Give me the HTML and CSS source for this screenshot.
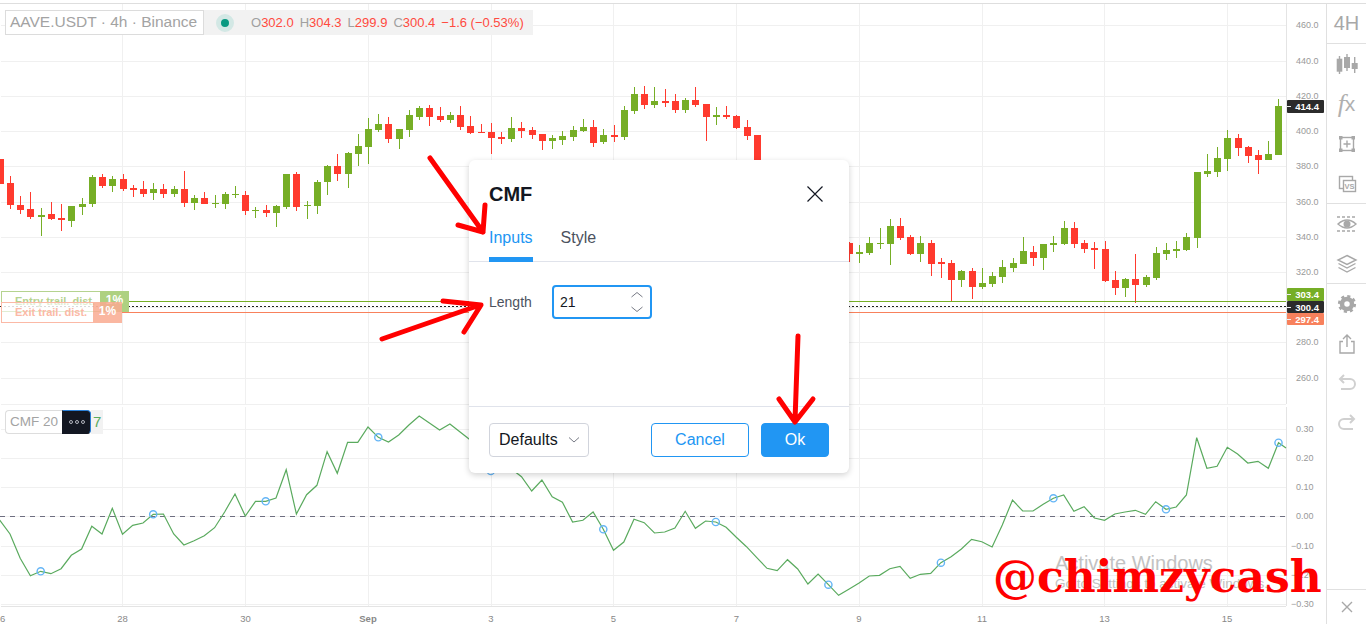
FILE: index.html
```html
<!DOCTYPE html>
<html lang="en">
<head>
  <meta charset="UTF-8">
  <meta name="viewport" content="width=device-width, initial-scale=1.0">
  <title>AAVE.USDT CMF settings</title>
  <link rel="stylesheet" href="styles.css">
</head>
<body>
  <div class="workspace">
    <main class="chart">
      <svg class="plot" id="plot" viewBox="0 4 1326 620" width="1326" height="620"></svg>

      <!-- Symbol legend -->
      <div class="legend">
        <div class="legend-title">AAVE.USDT · 4h · Binance</div>
        <div class="legend-values">
          <span class="status-dot"></span>
          <span class="ohlc">
            <span>O<b>302.0</b></span>
            <span>H<b>304.3</b></span>
            <span>L<b>299.9</b></span>
            <span>C<b>300.4</b></span>
            <span><b>−1.6 (−0.53%)</b></span>
          </span>
        </div>
      </div>

      <!-- Trailing stop labels -->
      <div class="trail trail-entry">
        <span class="trail-name">Entry trail. dist.</span>
        <span class="trail-pct">1%</span>
      </div>
      <div class="trail trail-exit">
        <span class="trail-name">Exit trail. dist.</span>
        <span class="trail-pct">1%</span>
      </div>

      <!-- Indicator legend -->
      <div class="study">
        <span class="study-name">CMF 20</span>
        <span class="study-more"><i></i><i></i><i></i></span>
        <span class="study-value">7</span>
      </div>

      <!-- Settings dialog -->
      <section class="dialog">
        <header class="dialog-head">
          <h2 class="dialog-title">CMF</h2>
          <svg class="dialog-close" viewBox="0 0 18 18" width="18" height="18">
            <path d="M1.5 1.5 L16.5 16.5 M16.5 1.5 L1.5 16.5"/>
          </svg>
        </header>
        <nav class="tabs">
          <span class="tab tab-active">Inputs</span>
          <span class="tab">Style</span>
        </nav>
        <div class="dialog-body">
          <span class="field-label">Length</span>
          <div class="number-input">
            <span>21</span>
            <svg class="stepper" viewBox="0 0 14 22" width="14" height="22">
              <path d="M1.5 6 L7 1.5 L12.5 6 M1.5 16 L7 20.5 L12.5 16"/>
            </svg>
          </div>
        </div>
        <footer class="dialog-foot">
          <div class="defaults">
            <span>Defaults</span>
            <svg class="stepper" viewBox="0 0 12 8" width="12" height="8">
              <path d="M1 1.5 L6 6 L11 1.5"/>
            </svg>
          </div>
          <div class="actions">
            <span class="btn btn-cancel">Cancel</span>
            <span class="btn btn-ok">Ok</span>
          </div>
        </footer>
      </section>

      <div class="activate">
        <div class="activate-title">Activate Windows</div>
        <div class="activate-sub">Go to Settings to activate Windows.</div>
      </div>
      <div class="handle">@chimzycash</div>

      <!-- Red annotation arrows -->
      <svg class="arrows" viewBox="0 4 1326 620" width="1326" height="620">
        <path d="M430 158 L483 232 M485 205 L483 232 L458 225"/>
        <path d="M382 339 L480 305 M443 301 L481 305 L464 332"/>
        <path d="M798 336 L795 421 M779 399 L795 422 L813 399"/>
      </svg>
    </main>

    <aside class="toolbar">
      <div class="tool-group">
        <div class="tool tool-interval">4H</div>
      </div>
      <div class="tool-group">
        <div class="tool">
          <svg viewBox="0 0 24 24" width="24" height="24">
            <path class="ico-line" d="M4.5 4 V22 M12 2 V19 M19.7 5 V21"/>
            <rect class="ico-fill" x="1.7" y="6.7" width="5.6" height="13"/>
            <rect class="ico-fill" x="9" y="5" width="6" height="11"/>
            <rect class="ico-fill" x="16.7" y="11" width="6" height="6"/>
          </svg>
        </div>
        <div class="tool tool-fx"><i>f</i>x</div>
        <div class="tool">
          <svg viewBox="0 0 24 24" width="24" height="24">
            <rect class="ico-line" x="5.5" y="5.5" width="13" height="13"/>
            <path class="ico-line" d="M12 8.5 V15.5 M8.5 12 H15.5"/>
            <rect class="ico-fill" x="4" y="4" width="3.5" height="3.5"/>
            <rect class="ico-fill" x="16.5" y="4" width="3.5" height="3.5"/>
            <rect class="ico-fill" x="4" y="16.5" width="3.5" height="3.5"/>
            <rect class="ico-fill" x="16.5" y="16.5" width="3.5" height="3.5"/>
          </svg>
        </div>
        <div class="tool">
          <svg viewBox="0 0 24 24" width="24" height="24">
            <rect class="ico-line" x="4.5" y="4.5" width="13" height="12"/>
            <rect class="ico-line ico-paper" x="8.5" y="8.5" width="12" height="11"/>
            <text class="ico-vs" x="14.5" y="17">VS</text>
          </svg>
        </div>
      </div>
      <div class="tool-group">
        <div class="tool">
          <svg viewBox="0 0 24 24" width="24" height="24">
            <path class="ico-line ico-dash" d="M2 5 H22 M2 19 H22"/>
            <path class="ico-line" d="M3 12 Q12 4 21 12 Q12 20 3 12 Z"/>
            <circle class="ico-fill" cx="12" cy="12" r="3.5"/>
          </svg>
        </div>
        <div class="tool">
          <svg viewBox="0 0 24 24" width="24" height="24">
            <path class="ico-line" d="M12 3.5 L21 8 L12 12.5 L3 8 Z M3.5 11.5 L12 16 L20.5 11.5 M3.5 15.5 L12 20 L20.5 15.5"/>
          </svg>
        </div>
      </div>
      <div class="tool-group tool-group-last">
        <div class="tool">
          <svg viewBox="0 0 24 24" width="24" height="24">
            <circle class="ico-gear" cx="12" cy="12" r="5"/>
            <circle class="ico-teeth" cx="12" cy="12" r="7.6"/>
          </svg>
        </div>
        <div class="tool">
          <svg viewBox="0 0 24 24" width="24" height="24">
            <path class="ico-line" d="M8 9.5 H5 V21 H19 V9.5 H16 M12 15 V3 M8 7 L12 3 L16 7"/>
          </svg>
        </div>
        <div class="tool">
          <svg class="ico-faint" viewBox="0 0 24 24" width="24" height="24">
            <path d="M5 7 H15 a5 5 0 0 1 0 10 H6 M9 3 L5 7 L9 11"/>
          </svg>
        </div>
        <div class="tool">
          <svg class="ico-faint" viewBox="0 0 24 24" width="24" height="24">
            <path d="M19 7 H9 a5 5 0 0 0 0 10 H18 M15 3 L19 7 L15 11"/>
          </svg>
        </div>
      </div>
      <div class="tool-close">
        <svg viewBox="0 0 24 24" width="24" height="24">
          <path class="ico-line" d="M7 7 L17 17 M17 7 L7 17"/>
        </svg>
      </div>
    </aside>
  </div>

  <script src="chart.js"></script>
</body>
</html>
```

FILE: styles.css
```css
* {
  box-sizing: border-box;
}

html, body {
  margin: 0;
  height: 624px;
  overflow: hidden;
  background: #fff;
  font-family: "Liberation Sans", Arial, sans-serif;
}

/* Page frame */
.workspace {
  display: flex;
  height: 624px;
  padding-top: 3px;
}

.workspace > * {
  border-top: 1px solid #dedede;
}

.chart {
  position: relative;
  flex: 1;
  height: 621px;
}

.plot, .arrows {
  display: block;
}

.arrows {
  position: absolute;
  left: 0;
  top: 0;
  pointer-events: none;
}

.arrows path {
  fill: none;
  stroke: #f00;
  stroke-width: 5;
  stroke-linecap: round;
  stroke-linejoin: round;
}

/* Plot contents */
.grid {
  stroke: #f0f0f0;
  stroke-width: 1;
  shape-rendering: crispEdges;
}

.axis-line {
  stroke: #e4e4e4;
  stroke-width: 1;
  shape-rendering: crispEdges;
}

.axis-text {
  fill: #999;
  font-size: 9px;
}

.time-text {
  fill: #888;
  font-size: 9.5px;
  text-anchor: middle;
}

.time-strong {
  font-weight: bold;
}

.up {
  fill: #76ae26;
}

.down {
  fill: #ff3a2e;
}

.cmf-line {
  fill: none;
  stroke: #5aaa5e;
  stroke-width: 1.2;
}

.cmf-dot {
  fill: none;
  stroke: #64b5f6;
  stroke-width: 1.4;
}

.zero-line {
  stroke: #6e6e80;
  stroke-width: 1;
  stroke-dasharray: 5 5;
  shape-rendering: crispEdges;
}

.level-up {
  stroke: #76ae26;
  shape-rendering: crispEdges;
}

.level-down {
  stroke: #f8815c;
  shape-rendering: crispEdges;
}

.level-last {
  stroke: #222;
  stroke-dasharray: 2 2;
  shape-rendering: crispEdges;
}

.tag-text {
  fill: #fff;
  font-size: 9.5px;
  font-weight: bold;
  text-anchor: end;
}

/* Symbol legend */
.legend {
  position: absolute;
  left: 5px;
  top: 6px;
  display: flex;
  height: 25px;
}

.legend-title {
  width: 199px;
  padding-left: 4px;
  border: 1px solid #dcdcdc;
  background: #fff;
  color: #a3a3a3;
  font-size: 15.5px;
  line-height: 22px;
  white-space: nowrap;
}

.legend-values {
  display: flex;
  align-items: center;
  width: 329px;
  padding-left: 12px;
  background: #f2f2f2;
}

.status-dot {
  width: 18px;
  height: 18px;
  border: 5px solid #d3e8e5;
  border-radius: 50%;
  background: #089981;
}

.ohlc {
  display: flex;
  gap: 6px;
  margin-left: 17px;
  color: #a0a0a0;
  font-size: 13px;
}

.ohlc b {
  color: #ff4a40;
  font-weight: normal;
}

/* Trailing stop labels */
.trail {
  position: absolute;
  left: 1px;
  display: flex;
  height: 21px;
  font-size: 11px;
  font-weight: bold;
  line-height: 19px;
}

.trail-entry {
  top: 287px;
  color: #b5d38f;
}

.trail-exit {
  top: 298px;
  color: #fbb9a6;
}

.trail-name {
  padding-left: 13px;
  border: 1px solid currentColor;
  border-right: 0;
  background: rgba(255, 255, 255, 0.6);
  white-space: nowrap;
}

.trail-entry .trail-name {
  width: 99px;
}

.trail-exit .trail-name {
  width: 92px;
}

.trail-pct {
  width: 29px;
  color: #fff;
  font-size: 12px;
  text-align: center;
}

.trail-entry .trail-pct {
  background: #aed181;
}

.trail-exit .trail-pct {
  background: rgba(249, 170, 145, 0.85);
}

/* Indicator legend */
.study {
  position: absolute;
  left: 5px;
  top: 406px;
  display: flex;
  height: 24px;
}

.study-name {
  width: 57px;
  padding-left: 4px;
  border: 1px solid #ddd;
  border-right: 0;
  border-radius: 4px 0 0 4px;
  background: #fff;
  color: #a3a3a3;
  font-size: 13.5px;
  line-height: 22px;
}

.study-more {
  display: flex;
  align-items: center;
  justify-content: center;
  gap: 2px;
  width: 29px;
  border: 1px solid #131722;
  border-right-color: #2a7fd6;
  border-top-color: #2a7fd6;
  border-radius: 0 4px 4px 0;
  background: #131722;
}

.study-more i {
  width: 4px;
  height: 4px;
  border: 1px solid #b2b5be;
  border-radius: 50%;
}

.study-value {
  width: 12px;
  padding-left: 2px;
  background: #f2f2f2;
  color: #5aaa5e;
  font-size: 15px;
  line-height: 24px;
}

/* Settings dialog */
.dialog {
  position: absolute;
  left: 469px;
  top: 156px;
  display: flex;
  flex-direction: column;
  width: 380px;
  height: 313px;
  border-radius: 6px;
  background: #fff;
  box-shadow: 0 2px 6px rgba(0, 0, 0, 0.18);
}

.dialog-head {
  display: flex;
  align-items: flex-start;
  justify-content: space-between;
  height: 60px;
  padding: 22px 25px 0 20px;
}

.dialog-title {
  margin: 0;
  color: #131722;
  font-size: 20px;
  line-height: 24px;
}

.dialog-close {
  margin-top: 3px;
  fill: none;
  stroke: #131722;
  stroke-width: 1.2;
}

.tabs {
  display: flex;
  gap: 28px;
  height: 42px;
  padding: 0 20px;
  border-bottom: 1px solid #e0e3eb;
}

.tab {
  height: 42px;
  padding-top: 9px;
  border-bottom: 5px solid transparent;
  color: #4c525e;
  font-size: 16px;
  line-height: 18px;
}

.tab-active {
  border-bottom-color: #2196f3;
  color: #2196f3;
}

.dialog-body {
  display: flex;
  flex: 1;
  align-items: flex-start;
  padding: 23px 20px 0;
}

.field-label {
  width: 63px;
  color: #4c525e;
  font-size: 14px;
  line-height: 34px;
}

.number-input {
  display: flex;
  align-items: center;
  justify-content: space-between;
  width: 100px;
  height: 34px;
  padding: 0 6px 0 6px;
  border: 2px solid #2196f3;
  border-radius: 4px;
  color: #131722;
  font-size: 14px;
}

.stepper {
  fill: none;
  stroke: #787b86;
  stroke-width: 1;
}

.dialog-foot {
  display: flex;
  justify-content: space-between;
  padding: 16px 20px;
  border-top: 1px solid #e0e3eb;
}

.defaults {
  display: flex;
  align-items: center;
  justify-content: space-between;
  width: 100px;
  height: 34px;
  padding: 0 8px 0 9px;
  border: 1px solid #d1d4dc;
  border-radius: 4px;
  color: #131722;
  font-size: 16px;
}

.actions {
  display: flex;
  gap: 12px;
}

.btn {
  height: 34px;
  border: 1px solid #2196f3;
  border-radius: 4px;
  font-size: 16px;
  line-height: 32px;
  text-align: center;
}

.btn-cancel {
  width: 98px;
  color: #2196f3;
}

.btn-ok {
  width: 68px;
  background: #2196f3;
  color: #fff;
}

/* Desktop overlays */
.activate {
  position: absolute;
  left: 1055px;
  top: 547px;
  color: #c2c2c2;
}

.activate-title {
  font-size: 20px;
  line-height: 24px;
}

.activate-sub {
  font-size: 13.5px;
  line-height: 18px;
}

.handle {
  position: absolute;
  left: 993px;
  top: 547px;
  color: #f00;
  font-family: "DejaVu Serif", serif;
  font-size: 44px;
  font-weight: bold;
  line-height: 52px;
  white-space: nowrap;
}

/* Right toolbar */
.toolbar {
  display: flex;
  flex-direction: column;
  flex: none;
  width: 40px;
  height: 621px;
  border-left: 1px solid #e0e0e0;
}

.tool-group {
  border-bottom: 1px solid #e0e0e0;
}

.tool-group:first-child .tool {
  height: 39px;
}

.tool-group-last {
  border-bottom: 0;
}

.tool {
  display: flex;
  align-items: center;
  justify-content: center;
  height: 40px;
}

.tool-group:nth-child(2) .tool:last-child,
.tool-group:nth-child(3) .tool:last-child {
  height: 39px;
}

.tool-interval {
  color: #a8a8a8;
  font-size: 20px;
}

.tool-fx {
  color: #b0b0b0;
  font-size: 21px;
}

.tool-fx i {
  font-family: "Liberation Serif", serif;
  font-size: 26px;
}

.tool-close {
  display: flex;
  align-items: center;
  justify-content: center;
  height: 35px;
  margin-top: auto;
  border-top: 1px solid #e0e0e0;
}

.ico-line {
  fill: none;
  stroke: #a8a8a8;
  stroke-width: 1.4;
}

.ico-fill {
  fill: #a8a8a8;
}

.ico-paper {
  fill: #fff;
}

.ico-dash {
  stroke-dasharray: 3 2;
}

.ico-vs {
  fill: #a8a8a8;
  font-size: 7.5px;
  font-weight: bold;
  text-anchor: middle;
}

.ico-gear {
  fill: none;
  stroke: #a8a8a8;
  stroke-width: 4.5;
}

.ico-teeth {
  fill: none;
  stroke: #a8a8a8;
  stroke-width: 3;
  stroke-dasharray: 3 2.97;
}

.ico-faint {
  fill: none;
  stroke: #d0d0d0;
  stroke-width: 2;
}
```

FILE: chart.js
```js
// Candles: top of wick, top of body, bottom of body, bottom of wick, direction
const candles = [
  [159,159,184,184,0],[176,183,205,209,0],[196,205,210,214,0],[192,209,217,219,0],[208,215,217,236,1],
  [202,214,219,220,0],[204,218,220,231,0],[206,206,221,227,1],[198,204,207,215,1],[175,177,204,207,1],
  [174,177,186,188,0],[176,179,186,192,1],[174,179,189,191,0],[185,188,190,197,0],[181,189,194,197,0],
  [183,189,193,200,1],[184,189,194,198,0],[186,189,194,197,1],[171,189,203,207,0],[195,198,203,210,1],
  [192,198,204,204,0],[195,203,204,208,1],[192,194,204,209,1],[186,194,195,198,1],[191,195,211,215,0],
  [207,210,211,218,1],[205,210,213,217,0],[205,206,213,227,1],[174,174,207,209,1],[172,174,207,211,0],
  [201,205,206,219,1],[180,182,206,214,1],[165,166,182,195,1],[154,166,174,181,0],[152,153,174,188,1],
  [134,146,154,166,1],[118,129,147,164,1],[114,124,130,132,1],[117,124,139,143,0],[129,129,139,149,1],
  [110,115,130,137,1],[106,108,117,120,1],[105,108,117,126,0],[107,116,120,122,0],[112,115,120,123,1],
  [106,115,127,130,0],[116,126,133,134,0],[124,132,133,133,0],[123,132,138,154,0],[132,137,139,144,0],
  [117,128,139,142,1],[122,128,131,138,0],[127,130,135,139,0],[134,134,141,150,0],[135,138,141,149,1],
  [131,136,140,145,1],[126,130,137,141,1],[119,127,131,132,1],[120,127,143,147,0],[129,135,142,144,1],
  [125,135,137,142,0],[106,110,137,140,1],[87,94,111,114,1],[86,94,105,109,0],[87,101,105,108,1],
  [89,101,103,107,0],[94,101,110,113,0],[98,100,110,113,1],[87,100,105,107,0],[104,104,117,141,0],
  [107,115,117,125,1],[106,115,117,119,0],[115,116,128,129,0],[120,127,136,140,0],[135,135,165,165,0],
  null,null,null,null,null,null,null,null,
  [242,243,254,262,0],[245,252,254,263,1],[237,243,253,255,1],[228,243,244,249,1],[219,226,244,265,1],
  [218,226,238,240,0],[235,237,254,255,0],[236,243,254,262,1],[240,243,264,276,0],[258,262,264,278,0],
  [260,263,280,301,0],[270,271,280,287,1],[268,271,287,299,0],[268,283,287,289,1],[272,276,284,287,1],
  [260,267,277,283,1],[258,263,268,272,1],[237,251,264,264,1],[246,252,258,266,0],[244,244,258,270,1],
  [236,243,245,252,1],[221,228,244,245,1],[222,228,244,248,0],[240,243,249,253,0],[242,248,250,269,0],
  [241,249,281,282,0],[271,280,288,295,0],[278,279,288,297,1],[254,279,285,303,0],[275,277,285,287,1],
  [247,253,278,280,1],[243,250,254,260,1],[241,249,251,258,1],[233,237,250,251,1],[172,172,238,248,1],
  [154,171,174,177,1],[147,158,172,177,1],[130,138,159,171,1],[134,138,148,156,0],[146,147,156,163,0],
  [150,155,160,174,0],[141,154,160,160,1],[99,106,155,155,1]
];

const cmf = [
  520,534,558.3,575.7,571.3,573.7,568.7,555.3,549,526.3,534,508.3,534.3,525.3,523,514.3,514,534,545,540.7,
  535.7,527.7,511.7,494,516,501.3,501.3,498,469.7,514,494.7,485.3,451.7,473.3,442.3,442.3,427,437.3,442,435,
  425,416,423,430,424,432,440,456,471,462,468.7,476.7,491,480,496.7,502.3,522,520.3,512,529.3,
  550.3,542,519.3,522.7,533,532,528,511.3,528.3,521,522,527.3,537.3,546.7,557.7,568.3,570.7,559.7,569,584,
  574,584.7,595.3,589.3,583,576,575.3,568.7,566.3,578.3,574.3,573.3,562.7,556.7,549,539.3,541.7,547,525,500,
  511,511,504.3,498.3,495,511.3,506.7,518,520.3,514,512,510.3,514.3,501.7,509.3,507,495,437.7,468.3,466.3,
  447.3,454,463,461.3,468.3,442.7,450
];

const barX = i => -0.26 + 10.23 * i;
const plotRight = 1286;
let svg = '';

function hLine(y, from, to, cls) {
  svg += `<line class="${cls}" x1="${from}" x2="${to}" y1="${y}" y2="${y}"/>`;
}

function vLine(x, from, to, cls) {
  svg += `<line class="${cls}" x1="${x}" x2="${x}" y1="${from}" y2="${to}"/>`;
}

function label(x, y, cls, text) {
  svg += `<text class="${cls}" x="${x}" y="${y}">${text}</text>`;
}

// Price pane grid and scale
const prices = [[25,'460.0'],[61,'440.0'],[96,'420.0'],[131,'400.0'],[166,'380.0'],[202,'360.0'],[237,'340.0'],[272,'320.0'],[307,'300.0'],[342,'280.0'],[378,'260.0']];
prices.forEach(([y, text]) => {
  hLine(y + 0.5, 1, plotRight, 'grid');
  label(1296, y + 3, 'axis-text', text);
});

// Indicator pane grid and scale
const levels = [[429,'0.30'],[458,'0.20'],[487,'0.10'],[516,'0.00'],[546,'−0.10'],[575,'−0.20'],[604,'−0.30']];
levels.forEach(([y, text]) => {
  hLine(y + 0.5, 1, plotRight, 'grid');
  label(text[0] === '−' ? 1291 : 1296, y + 3, 'axis-text', text);
});

// Time scale
const times = [[0,'26'],[122.5,'28'],[245.5,'30'],[368,'Sep'],[491,'3'],[613.5,'5'],[736.5,'7'],[859,'9'],[982,'11'],[1104.5,'13'],[1227,'15']];
times.forEach(([x, text]) => {
  if (x > 0) {
    vLine(x, 4, 404, 'grid');
    vLine(x, 407, 606, 'grid');
  }
  label(x, 622, text === 'Sep' ? 'time-text time-strong' : 'time-text', text);
});

hLine(404.5, 1, plotRight, 'grid');
hLine(606.5, 1, plotRight, 'axis-line');
vLine(1286.5, 4, 404, 'axis-line');
vLine(1286.5, 407, 606, 'axis-line');

// Candles
candles.forEach((c, i) => {
  if (!c) return;
  const x = Math.round(barX(i));
  const cls = c[4] ? 'up' : 'down';
  svg += `<rect class="${cls}" x="${x}" y="${c[0]}" width="1" height="${c[3] - c[0]}" shape-rendering="crispEdges"/>`;
  svg += `<rect class="${cls}" x="${x - 3}" y="${c[1]}" width="7" height="${c[2] - c[1]}" shape-rendering="crispEdges"/>`;
});

// Position levels
hLine(301.5, 122, plotRight, 'level-up');
hLine(312.5, 122, plotRight, 'level-down');
hLine(306.5, 0, plotRight, 'level-last');

// CMF line with a marker every 11 bars
hLine(516.5, 0, plotRight, 'zero-line');
const points = cmf.map((y, i) => `${barX(i).toFixed(1)} ${y}`).slice(0, 126);
svg += `<path class="cmf-line" d="M${points.join(' L')} L${plotRight} 448"/>`;
for (let i = 4; i < 126; i += 11) {
  svg += `<circle class="cmf-dot" cx="${barX(i).toFixed(1)}" cy="${cmf[i]}" r="3.6"/>`;
}

// Price tags
const tags = [[100,13,'#2b2b2b','414.4'],[288,13,'#76ae26','303.4'],[301,12,'#2b2b2b','300.4'],[313,12,'#f8815c','297.4']];
tags.forEach(([y, h, color, text]) => {
  svg += `<rect x="1287" y="${y}" width="37" height="${h}" rx="1" fill="${color}"/>`;
  hLine(y + 6.5, 1287, 1291, 'grid');
  label(1319, y + 10, 'tag-text', text);
});

document.getElementById('plot').innerHTML = svg;
```
